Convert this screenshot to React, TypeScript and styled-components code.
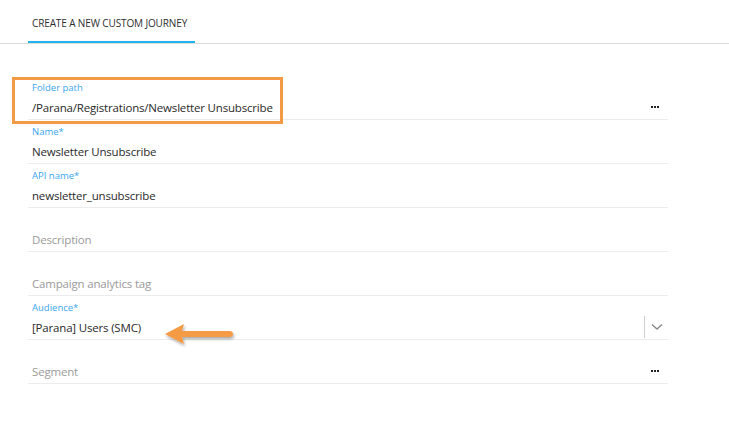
import React from "react";
import styled, { createGlobalStyle } from "styled-components";

const Global = createGlobalStyle`
  html, body { margin: 0; padding: 0; background: #fff; }
  body { font-family: "Open Sans", "Noto Sans", sans-serif; color: #333; }
`;

const Page = styled.div`
  width: 729px;
  height: 427px;
  position: relative;
  overflow: hidden;
  background: #fff;
`;

const TabBar = styled.div`
  height: 43px;
  border-bottom: 1px solid #dcdcdc;
  display: flex;
  align-items: flex-end;
  padding-left: 28px;
`;

const Tab = styled.div`
  height: 41px;
  box-sizing: border-box;
  padding: 2px 0 0 4px;
  width: 167px;
  display: flex;
  align-items: center;
  white-space: nowrap;
  font-size: 10px;
  letter-spacing: -0.12px;
  color: #2e2e2e;
  border-bottom: 2px solid #1fb4ef;
`;

const Form = styled.div`
  margin: 32px 0 0 28px;
  width: 640px;
  display: flex;
  flex-direction: column;
`;

const Field = styled.div`
  height: 44px;
  box-sizing: border-box;
  border-bottom: 1px solid #ececec;
  padding: 5px 4px 0 4px;
  display: flex;
  flex-direction: column;
  position: relative;
`;

const Label = styled.div`
  height: 14px;
  line-height: 14px;
  font-size: 9.5px;
  color: #3aa6ee;
`;

const Value = styled.div<{ $placeholder?: boolean }>`
  margin-top: 4px;
  height: 18px;
  line-height: 18px;
  font-size: 11.5px;
  letter-spacing: -0.18px;
  color: ${(p) => (p.$placeholder ? "#9a9a9a" : "#2a2a2a")};
`;

const Dots = styled.div`
  position: absolute;
  right: 9px;
  bottom: 11px;
  display: flex;
  gap: 1px;
  & > span {
    width: 2px;
    height: 2px;
    background: #222;
  }
`;

const SelectControl = styled.div`
  position: absolute;
  right: 0;
  top: 20px;
  width: 23px;
  height: 22px;
  border-left: 1px solid #cfcfcf;
  display: flex;
  align-items: center;
  justify-content: center;
`;

const Highlight = styled.div`
  position: absolute;
  left: 12px;
  top: 77px;
  width: 271px;
  height: 47px;
  box-sizing: border-box;
  border: 3px solid #f49a47;
`;

const Arrow = styled.svg`
  position: absolute;
  left: 160px;
  top: 318px;
`;

const MoreDots = () => (
  <Dots>
    <span />
    <span />
    <span />
  </Dots>
);

export default function App() {
  return (
    <Page>
      <Global />
      <TabBar>
        <Tab>CREATE A NEW CUSTOM JOURNEY</Tab>
      </TabBar>
      <Form>
        <Field>
          <Label>Folder path</Label>
          <Value>/Parana/Registrations/Newsletter Unsubscribe</Value>
          <MoreDots />
        </Field>
        <Field>
          <Label>Name*</Label>
          <Value>Newsletter Unsubscribe</Value>
        </Field>
        <Field>
          <Label>API name*</Label>
          <Value>newsletter_unsubscribe</Value>
        </Field>
        <Field>
          <Label />
          <Value $placeholder>Description</Value>
        </Field>
        <Field>
          <Label />
          <Value $placeholder>Campaign analytics tag</Value>
        </Field>
        <Field>
          <Label>Audience*</Label>
          <Value>[Parana] Users (SMC)</Value>
          <SelectControl>
            <svg width="12" height="8" viewBox="0 0 12 8">
              <path d="M1 1.5 L6 6 L11 1.5" fill="none" stroke="#8a8a8a" strokeWidth="1.4" />
            </svg>
          </SelectControl>
        </Field>
        <Field>
          <Label />
          <Value $placeholder>Segment</Value>
          <MoreDots />
        </Field>
      </Form>
      <Highlight />
      <Arrow width="80" height="36" viewBox="0 0 80 36">
        <defs>
          <filter id="sh" x="-20%" y="-30%" width="140%" height="180%">
            <feGaussianBlur in="SourceAlpha" stdDeviation="1.5" />
            <feOffset dx="1" dy="2" result="o" />
            <feComponentTransfer>
              <feFuncA type="linear" slope="0.35" />
            </feComponentTransfer>
            <feMerge>
              <feMergeNode />
              <feMergeNode in="SourceGraphic" />
            </feMerge>
          </filter>
        </defs>
        <g filter="url(#sh)">
          <path d="M5 16 L24 6 L22 13 L69 13 Q73 13 73 16 Q73 19 69 19 L22 19 L24 26 Z" fill="#f59a44" />
        </g>
      </Arrow>
    </Page>
  );
}
